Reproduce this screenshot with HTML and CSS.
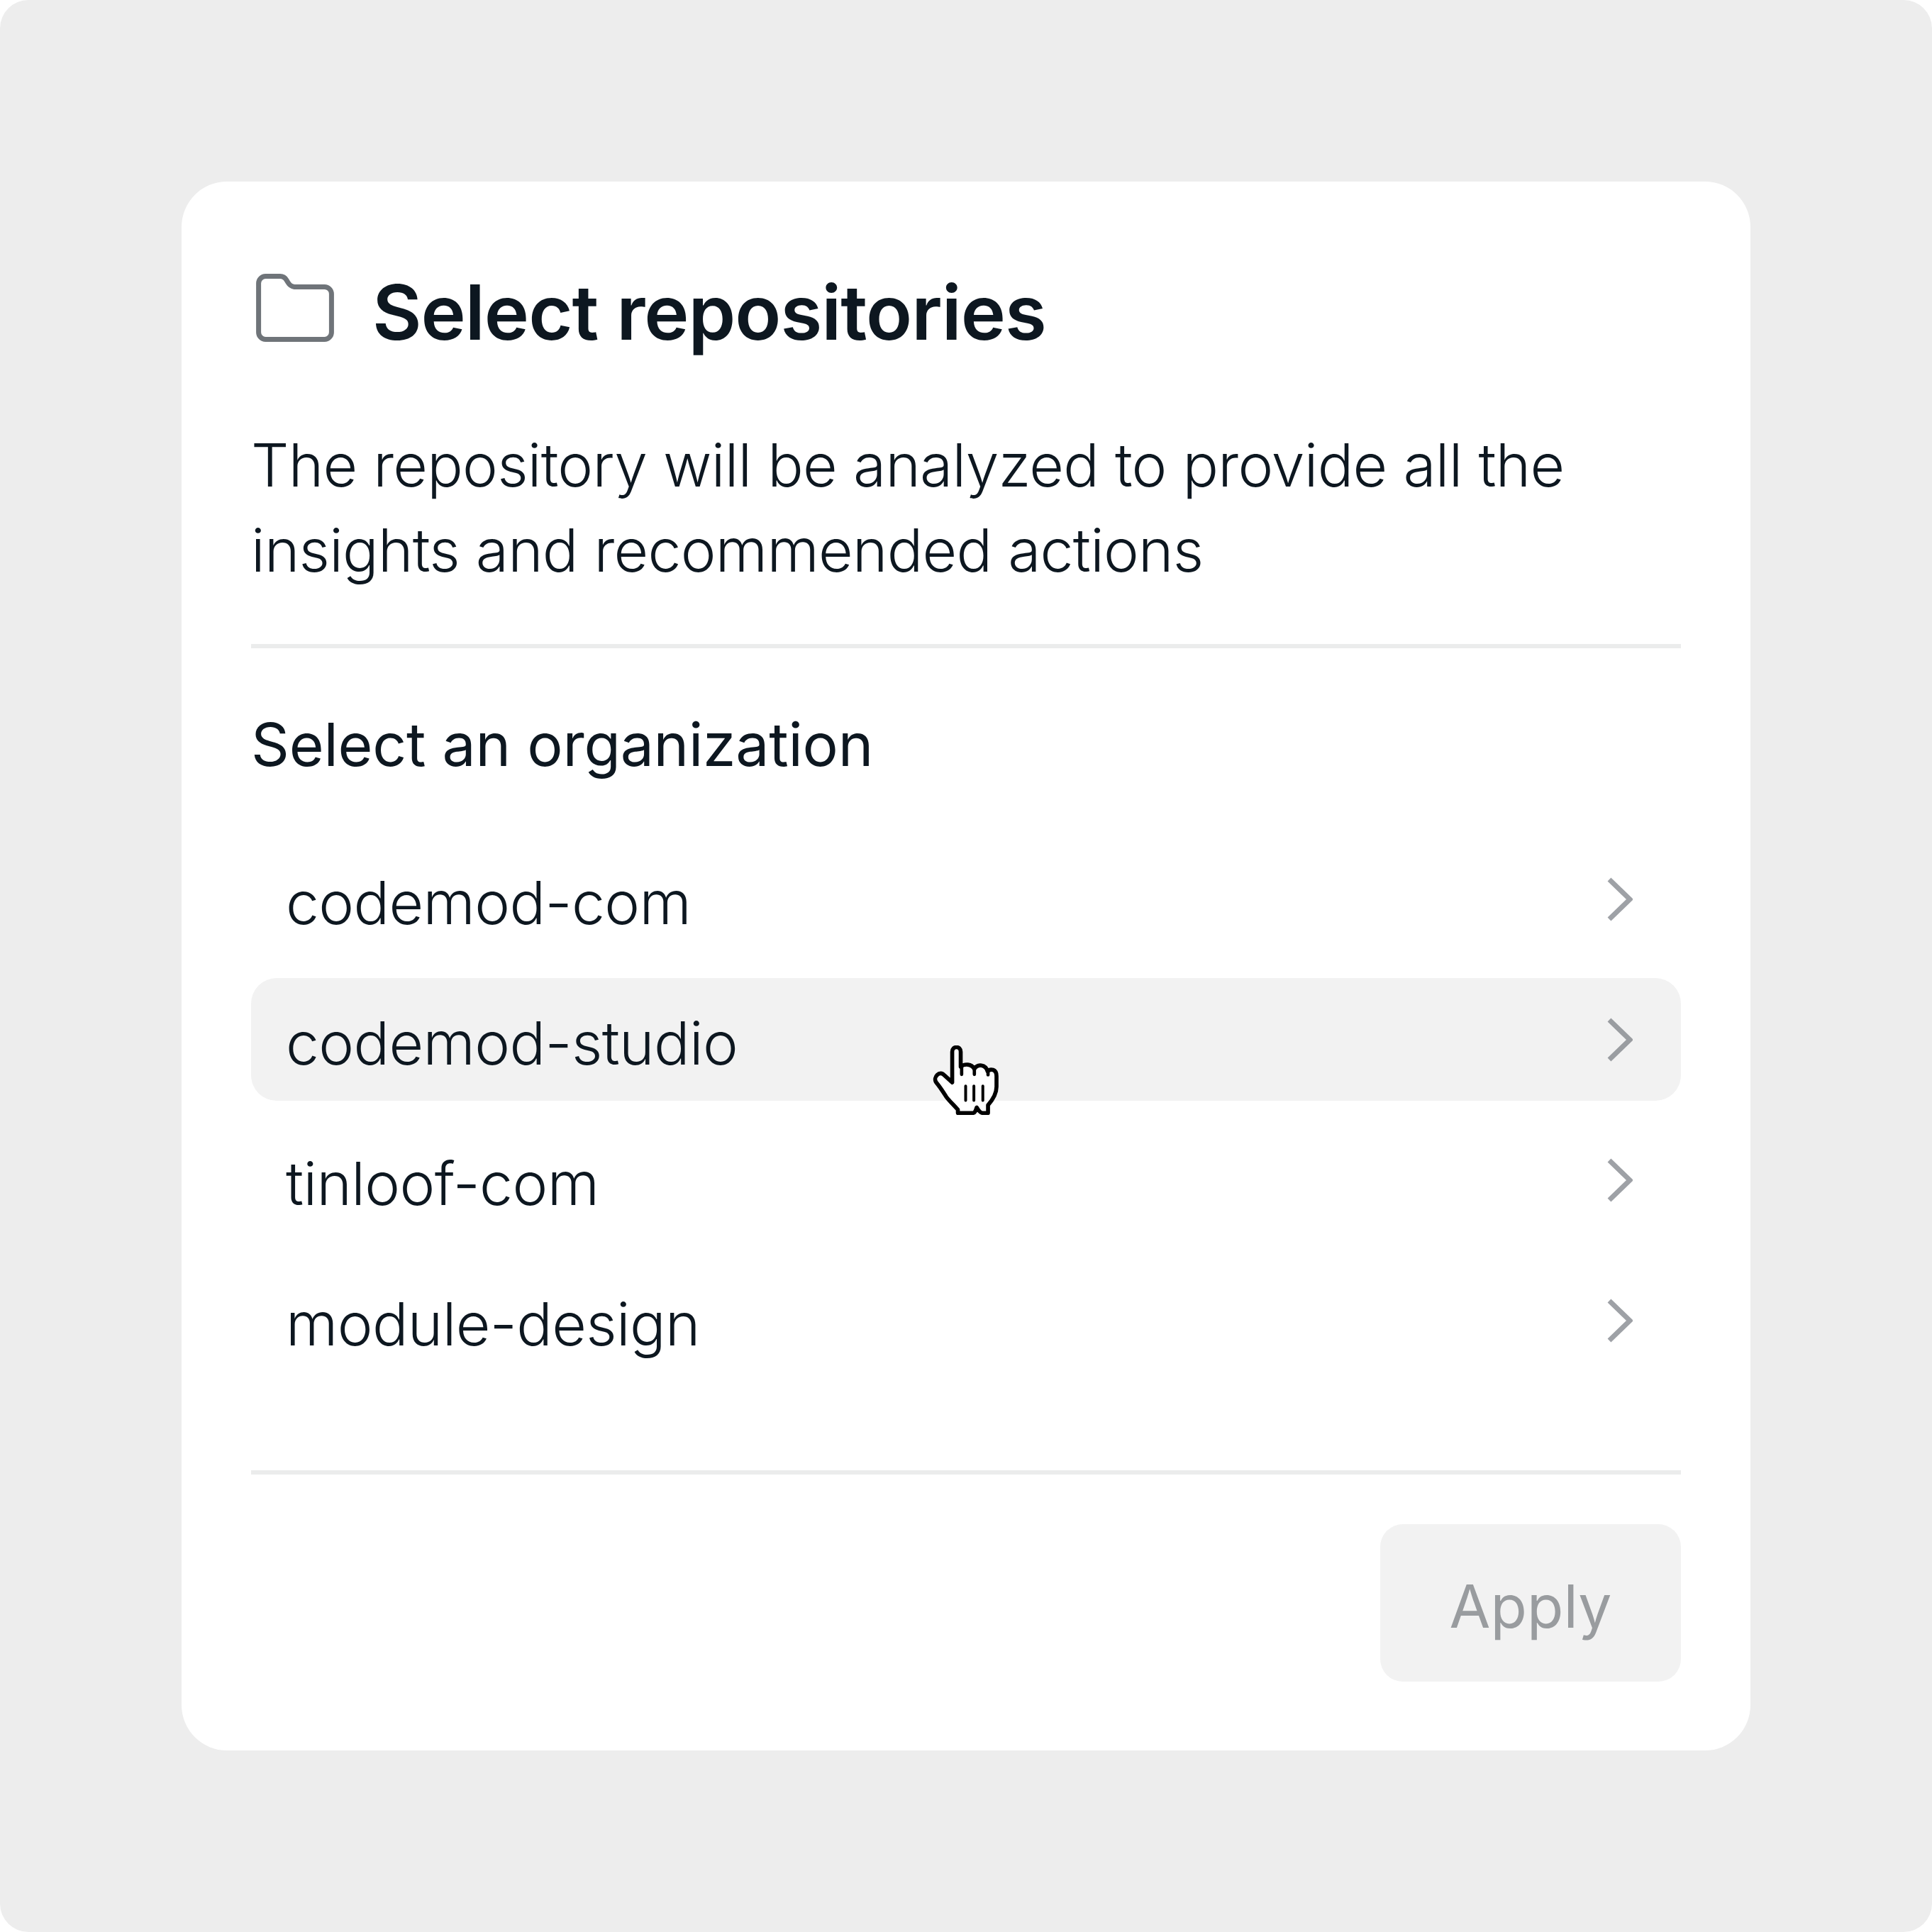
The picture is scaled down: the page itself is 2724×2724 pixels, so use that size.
FILE: index.html
```html
<!DOCTYPE html>
<html lang="en">
<head>
  <meta charset="UTF-8" />
  <title>Select repositories</title>
  <link rel="stylesheet" href="styles.css">
</head>
<body>
  <div class="frame">
    <div class="card">
      <!-- Header with folder icon -->
      <div class="card-header">
        <svg class="folder-icon" viewBox="0 0 110 96" fill="none">
          <path d="M3.6 13.5C3.6 8 8 3.6 13.5 3.6H34C38 3.6 41 5.6 43 9L45 12.3C47 15.7 50 18 54 18.5H96.5C102 18.5 106.4 22.9 106.4 28.4V82.5C106.4 88 102 92.4 96.5 92.4H13.5C8 92.4 3.6 88 3.6 82.5Z" stroke="#6f7479" stroke-width="7"/>
        </svg>
        <h1 class="card-title">Select repositories</h1>
      </div>
      <p class="card-desc">The repository will be analyzed to provide all the insights and recommended actions</p>
      <div class="divider"></div>

      <h2 class="section-title">Select an organization</h2>
      <ul class="org-list">
        <li class="org-row">
          <span>codemod-com</span>
          <svg class="chevron" viewBox="0 0 36 62" fill="none"><path d="M3 3L32 31L3 59" stroke="#9ea1a6" stroke-width="7"/></svg>
        </li>
        <li class="org-row org-row-hover">
          <span>codemod-studio</span>
          <svg class="chevron" viewBox="0 0 36 62" fill="none"><path d="M3 3L32 31L3 59" stroke="#9a9da1" stroke-width="7"/></svg>
          <!-- Pointer cursor sits over the hovered row -->
          <svg class="cursor" viewBox="165 105 280 295">
            <path d="M248 262V132C248 106 284 106 284 132V195C300 182 330 182 342 205C355 182 390 185 398 215C410 202 436 205 436 235V280C436 310 420 335 400 358V392H378C368 392 360 382 352 368C348 380 345 392 335 392H272V378C255 358 235 340 222 322C205 295 195 280 180 262C165 240 195 208 215 232Z" fill="#fff" stroke="#000" stroke-width="17" stroke-linejoin="round"/>
            <path d="M288 195V228M342 205V228M400 215V230" fill="none" stroke="#000" stroke-width="14" stroke-linecap="round"/>
            <path d="M305 277V338M340 277V338M378 277V338" fill="none" stroke="#000" stroke-width="12" stroke-linecap="round"/>
          </svg>
        </li>
        <li class="org-row">
          <span>tinloof-com</span>
          <svg class="chevron" viewBox="0 0 36 62" fill="none"><path d="M3 3L32 31L3 59" stroke="#9ea1a6" stroke-width="7"/></svg>
        </li>
        <li class="org-row">
          <span>module-design</span>
          <svg class="chevron" viewBox="0 0 36 62" fill="none"><path d="M3 3L32 31L3 59" stroke="#9ea1a6" stroke-width="7"/></svg>
        </li>
      </ul>
      <div class="divider"></div>

      <div class="card-footer">
        <button class="btn-apply">Apply</button>
      </div>
    </div>
  </div>
</body>
</html>
```

FILE: styles.css
```css
/* Page reset */
body {
  margin: 0;
  background: #fff;
  font-family: "Inter", "Liberation Sans", sans-serif;
  color: #0d1720;
}

/* Grey rounded backdrop */
.frame {
  width: 2724px;
  height: 2724px;
  background: #ededed;
  border-radius: 40px;
  display: flex;
  align-items: center;
  justify-content: center;
}

/* White card */
.card {
  width: 2212px;
  height: 2212px;
  box-sizing: border-box;
  padding: 98px;
  background: #fff;
  border-radius: 64px;
}

.card-header {
  display: flex;
  align-items: center;
  gap: 54px;
  height: 126px;
  margin-top: 23px;
}

.folder-icon {
  width: 110px;
  height: 96px;
  margin: -12px 0 0 7px;
}

.card-title {
  margin: 0;
  font-size: 107px;
  font-weight: 600;
  letter-spacing: -1px;
}

.card-desc {
  margin: 93px 0 0;
  font-size: 84px;
  line-height: 120px;
  font-weight: 300;
  letter-spacing: -0.73px;
}

.divider {
  height: 6px;
  background: #ebecec;
}

.card-desc + .divider {
  margin-top: 72px;
}

.section-title {
  margin: 80px 0 0;
  font-size: 84px;
  line-height: 112px;
  font-weight: 400;
  letter-spacing: -0.24px;
}

/* Organization rows */
.org-list {
  list-style: none;
  margin: 75px 0 0;
  padding: 0;
  display: flex;
  flex-direction: column;
  gap: 25px;
}

.org-row {
  position: relative;
  height: 173px;
  padding: 0 68px 0 49px;
  display: flex;
  align-items: center;
  justify-content: space-between;
  font-size: 84px;
  font-weight: 300;
  letter-spacing: -0.6px;
  border-radius: 36px;
}

.org-row span {
  padding-top: 10px;
}

.org-row-hover {
  background: #f2f2f2;
}

.chevron {
  width: 36px;
  height: 62px;
}

.cursor {
  position: absolute;
  left: 961px;
  top: 95px;
  width: 93px;
  height: 98px;
}

.org-list + .divider {
  margin-top: 125px;
}

.card-footer {
  display: flex;
  justify-content: flex-end;
  margin-top: 70px;
}

.btn-apply {
  width: 424px;
  height: 222px;
  padding: 8px 0 0;
  border: none;
  border-radius: 32px;
  background: #f2f2f2;
  color: #999c9f;
  font-family: inherit;
  font-size: 84px;
  font-weight: 400;
}
```
